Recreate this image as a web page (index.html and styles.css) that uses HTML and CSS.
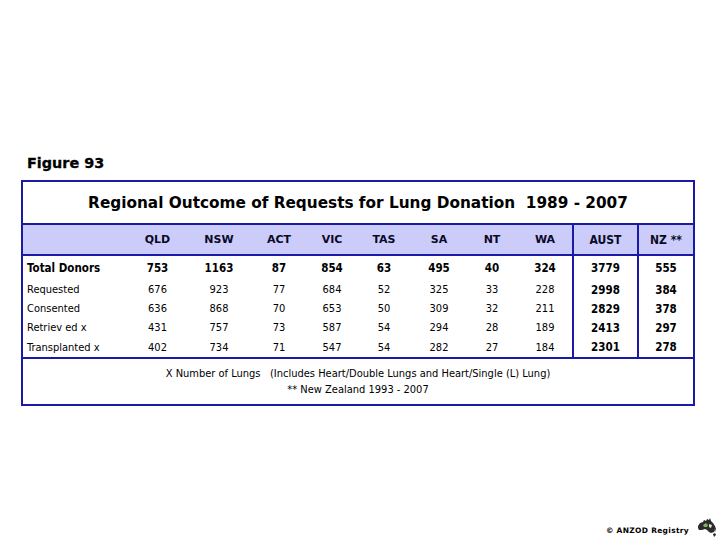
FILE: index.html
```html
<!DOCTYPE html>
<html>
<head>
<meta charset="utf-8">
<link rel="stylesheet" href="styles.css">
</head>
<body>
<div class="page">
  <h1 class="fig">Figure 93</h1>
  <div class="tbl">
    <div class="title">Regional Outcome of Requests for Lung Donation&nbsp; 1989 - 2007</div>
    <div class="grid head">
      <div class="c lbl"></div>
      <div class="c">QLD</div>
      <div class="c">NSW</div>
      <div class="c">ACT</div>
      <div class="c">VIC</div>
      <div class="c">TAS</div>
      <div class="c">SA</div>
      <div class="c">NT</div>
      <div class="c">WA</div>
      <div class="c sum">AUST</div>
      <div class="c sum">NZ **</div>
    </div>
    <div class="grid data">
      <div class="c lbl b">Total Donors</div>
      <div class="c b">753</div><div class="c b">1163</div><div class="c b">87</div><div class="c b">854</div><div class="c b">63</div><div class="c b">495</div><div class="c b">40</div><div class="c b">324</div><div class="c sum">3779</div><div class="c sum">555</div>

      <div class="c lbl">Requested</div>
      <div class="c">676</div><div class="c">923</div><div class="c">77</div><div class="c">684</div><div class="c">52</div><div class="c">325</div><div class="c">33</div><div class="c">228</div><div class="c sum">2998</div><div class="c sum">384</div>

      <div class="c lbl">Consented</div>
      <div class="c">636</div><div class="c">868</div><div class="c">70</div><div class="c">653</div><div class="c">50</div><div class="c">309</div><div class="c">32</div><div class="c">211</div><div class="c sum">2829</div><div class="c sum">378</div>

      <div class="c lbl">Retriev ed x</div>
      <div class="c">431</div><div class="c">757</div><div class="c">73</div><div class="c">587</div><div class="c">54</div><div class="c">294</div><div class="c">28</div><div class="c">189</div><div class="c sum">2413</div><div class="c sum">297</div>

      <div class="c lbl">Transplanted x</div>
      <div class="c">402</div><div class="c">734</div><div class="c">71</div><div class="c">547</div><div class="c">54</div><div class="c">282</div><div class="c">27</div><div class="c">184</div><div class="c sum">2301</div><div class="c sum">278</div>
    </div>
    <div class="note">
      <div>X Number of Lungs&nbsp;&nbsp; (Includes Heart/Double Lungs and Heart/Single (L) Lung)</div>
      <div>** New Zealand 1993 - 2007</div>
    </div>
  </div>
  <footer class="foot">
    <span class="copy">© ANZOD Registry</span>
    <svg class="logo" viewBox="0 0 22 22" width="22" height="22">
      <path d="M2 9 L4 6 L7 5 L8 3 L10 4 L11 2 L13 3 L14 1 L15 4 L17 6 L19 9 L20 12 L18 15 L15 16 L13 15 L11 13 L9 12 L6 13 L3 13 L2 11 Z" fill="#2b2b2b"/>
      <path d="M7 8 L10 6 L12 8 L11 10 L8 10 Z" fill="#7fae6a"/>
      <path d="M13 7 L16 8 L15 11 L13 10 Z" fill="#d8e8c8"/>
      <path d="M17 17 L19 16 L20 18 L18 20 Z" fill="#2b2b2b"/>
      <path d="M18 12 L20 13 L19 15 Z" fill="#5f8f4a"/>
    </svg>
  </footer>
</div>
</body>
</html>
```

FILE: styles.css
```css
html, body {
  margin: 0;
  padding: 0;
  background: #ffffff;
}

.page {
  width: 720px;
  height: 540px;
  display: flex;
  flex-direction: column;
  box-sizing: border-box;
  padding: 154px 0 0 21px;
  font-family: "DejaVu Sans Condensed", "DejaVu Sans", sans-serif;
  color: #000;
}

.fig {
  margin: 0 0 8px 6px;
  font-family: "DejaVu Sans", sans-serif;
  font-weight: bold;
  font-size: 14.4px;
  line-height: 18px;
  height: 18px;
  -webkit-text-stroke: 0.3px #000;
}

.tbl {
  width: 674px;
  box-sizing: border-box;
  border: 2px solid #1a1aa6;
}

.title {
  height: 41px;
  display: flex;
  align-items: center;
  justify-content: center;
  font-family: "DejaVu Sans", sans-serif;
  font-weight: bold;
  font-size: 15.3px;
  padding-top: 1px;
  box-sizing: border-box;
}

.grid {
  display: grid;
  grid-template-columns: 104px 61px 62px 58px 48px 56px 54px 52px 54px 65px 56px;
  border-top: 2px solid #1a1aa6;
}

.c {
  display: flex;
  align-items: center;
  justify-content: center;
  white-space: nowrap;
}

.lbl {
  justify-content: flex-start;
  padding-left: 4px;
}

.sum {
  border-left: 2px solid #1a1aa6;
  font-weight: bold;
}

.head {
  background: #ccccfa;
  grid-template-rows: 29px;
  font-family: "DejaVu Sans", sans-serif;
  font-weight: bold;
  font-size: 11px;
  color: #0a0a28;
}

.head .sum {
  font-family: "DejaVu Sans Condensed", "DejaVu Sans", sans-serif;
  font-size: 12px;
}

.data {
  grid-template-rows: 24px 19px 19px 19px 20px;
  font-size: 11px;
}

.b {
  font-weight: bold;
  font-size: 11.5px;
}

.data .sum {
  font-size: 11.5px;
}

.note {
  border-top: 2px solid #1a1aa6;
  height: 47px;
  box-sizing: border-box;
  padding-top: 7px;
  text-align: center;
  font-size: 11px;
  line-height: 16px;
}

.foot {
  margin-top: auto;
  display: flex;
  justify-content: flex-end;
  align-items: center;
  gap: 7px;
  padding: 0 2px 1px 0;
}

.copy {
  font-family: "DejaVu Sans", sans-serif;
  font-weight: bold;
  font-size: 7.5px;
  letter-spacing: 0.3px;
  padding-top: 4px;
}

.logo {
  display: block;
}
```
